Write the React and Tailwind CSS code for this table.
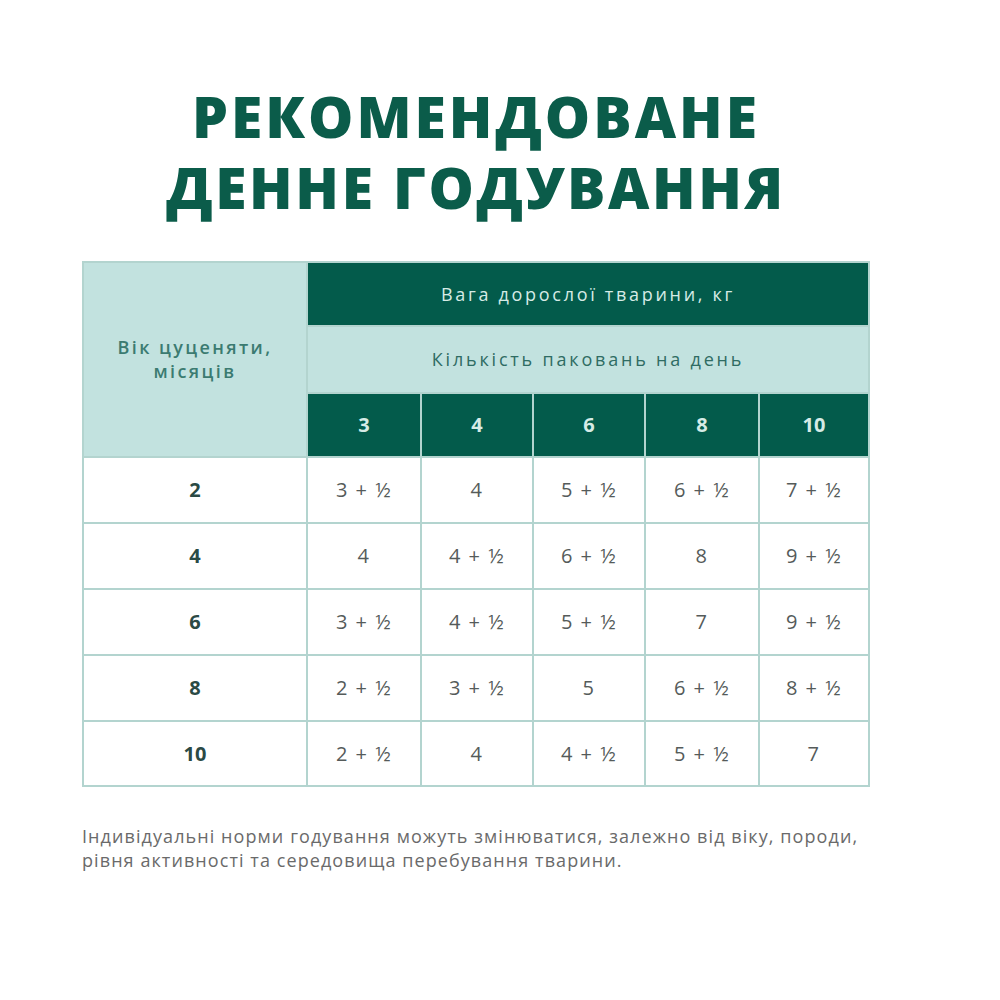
import React from "react";

const weights = ["3", "4", "6", "8", "10"];
const rows = [
  ["2", "3 + ½", "4", "5 + ½", "6 + ½", "7 + ½"],
  ["4", "4", "4 + ½", "6 + ½", "8", "9 + ½"],
  ["6", "3 + ½", "4 + ½", "5 + ½", "7", "9 + ½"],
  ["8", "2 + ½", "3 + ½", "5", "6 + ½", "8 + ½"],
  ["10", "2 + ½", "4", "4 + ½", "5 + ½", "7"],
];

export default function App() {
  return (
    <div
      className="w-[1000px] h-[1000px] bg-white"
      style={{ fontFamily: '"Open Sans", "Noto Sans", sans-serif' }}
    >
      <div className="ml-[82px] w-[788px] pt-[81px]">
        <h1 className="text-center text-[57px] leading-[71px] font-extrabold tracking-[3px] text-[#0b5c4a] uppercase">
          <div>РЕКОМЕНДОВАНЕ</div>
          <div className="tracking-[2.6px]">ДЕННЕ ГОДУВАННЯ</div>
        </h1>

        <div className="mt-[38px] grid grid-cols-[222px_112px_110px_110px_112px_108px] grid-rows-[62px_65px_62px_64px_64px_64px_64px_63px] gap-[2px] p-[2px] bg-[#b3d4cf]">
          <div className="row-span-3 bg-[#c2e2df] flex justify-center pt-[72px] text-center text-[18px] leading-[24px] font-semibold tracking-[2.4px] text-[#3b7b71]">
            Вік цуценяти,
            <br />
            місяців
          </div>
          <div className="col-span-5 bg-[#035b4b] flex items-center justify-center text-[18px] text-[#d6ebe6] tracking-[2.7px]">
            Вага дорослої тварини, кг
          </div>
          <div className="col-span-5 bg-[#c2e2df] flex items-center justify-center text-[18px] font-medium text-[#2f6c63] tracking-[2.8px]">
            Кількість паковань на день
          </div>
          {weights.map((w) => (
            <div
              key={w}
              className="bg-[#035b4b] flex items-center justify-center text-[20px] font-bold text-[#d6ebe6]"
            >
              {w}
            </div>
          ))}
          {rows.map((r) =>
            r.map((c, i) => (
              <div
                key={r[0] + "-" + i}
                className={
                  i === 0
                    ? "bg-white flex items-center justify-center text-[20px] font-bold text-[#2b4a45]"
                    : "bg-white flex items-center justify-center text-[20px] tracking-[1.5px] text-[#555b5a]"
                }
              >
                {c}
              </div>
            ))
          )}
        </div>

        <p className="mt-[37px] text-[18px] leading-[24px] text-[#6a6a6a] tracking-[1.08px] whitespace-nowrap">
          Індивідуальні норми годування можуть змінюватися, залежно від віку, породи,
          <br />
          рівня активності та середовища перебування тварини.
        </p>
      </div>
    </div>
  );
}
